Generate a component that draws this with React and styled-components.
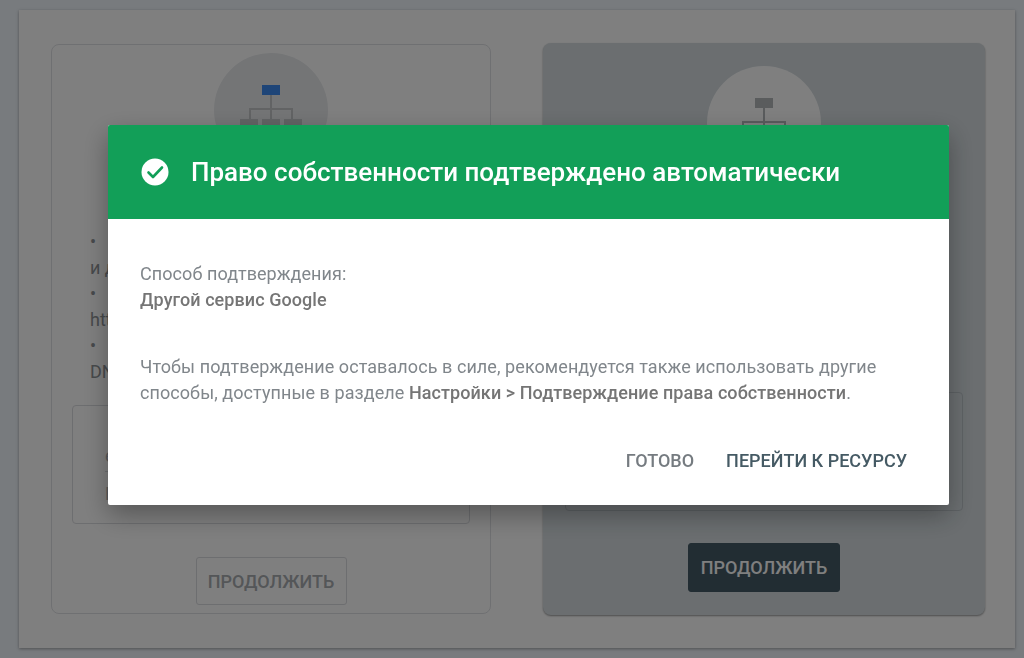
import React from 'react';
import styled, { createGlobalStyle } from 'styled-components';

const GlobalStyle = createGlobalStyle`
    html, body {
        margin: 0;
        height: 100%;
        overflow: hidden;
        background: #f0f6fc;
        font-family: Roboto, "Liberation Sans", sans-serif;
    }
`;

const Sheet = styled.main`
    box-sizing: border-box;
    width: 996px;
    height: 638px;
    margin: 10px 0 0 19px;
    padding: 33px 30px 33px 32px;
    display: grid;
    grid-template-columns: 440px 442px;
    justify-content: space-between;
    background: #fff;
    box-shadow: 0 1px 3px rgba(0, 0, 0, .35);
`;

const Card = styled.section`
    box-sizing: border-box;
    display: flex;
    flex-direction: column;
    align-items: center;
    padding: ${props => (props.selected ? '22px 21px 22px' : '8px 20px 8px')};
    margin: ${props => (props.selected ? '0' : '1px 0')};
    border-radius: 8px;
    border: 1px solid ${props => (props.selected ? 'transparent' : '#dfe1e5')};
    background: ${props => (props.selected ? '#d6dde1' : '#fff')};
    box-shadow: ${props => (props.selected ? '0 1px 2px rgba(0, 0, 0, .4)' : 'none')};
`;

const Badge = styled.div`
    flex: none;
    width: 114px;
    height: 114px;
    display: flex;
    justify-content: center;
    align-items: flex-start;
    padding-top: 32px;
    box-sizing: border-box;
    border-radius: 50%;
    background: ${props => (props.selected ? '#fff' : '#e8eaed')};
`;

const CardTitle = styled.h2`
    margin: 24px 0 0;
    font-size: 22px;
    font-weight: 400;
    color: #3c4043;
`;

const Features = styled.div`
    align-self: stretch;
    margin-top: 13px;
    padding-left: 18px;
    font-size: 18px;
    line-height: 26px;
    color: #8f9498;
`;

const Feature = styled.p`
    margin: 0;
    &::before {
        content: '•';
        margin-right: 12px;
    }
`;

const InputBox = styled.div`
    align-self: stretch;
    box-sizing: border-box;
    height: 119px;
    margin-top: auto;
    padding: 38px 32px 0;
    border: 1px solid ${props => (props.selected ? '#bcc4c9' : '#dadce0')};
    border-radius: 4px;
    font-size: 18px;
    color: #b0b4b8;
`;

const InputValue = styled.div`
    height: 27px;
    line-height: 24px;
    border-bottom: 1px solid #dadce0;
`;

const InputHint = styled.div`
    margin-top: 10px;
    line-height: 24px;
`;

const ContinueButton = styled.button`
    flex: none;
    box-sizing: border-box;
    width: ${props => (props.primary ? '152px' : '151px')};
    height: ${props => (props.primary ? '49px' : '48px')};
    margin-top: ${props => (props.primary ? '32px' : '33px')};
    padding: 0;
    border: 1px solid ${props => (props.primary ? '#445a66' : '#dadce0')};
    border-radius: 3px;
    background: ${props => (props.primary ? '#445a66' : '#fff')};
    color: ${props => (props.primary ? '#fff' : '#a8acb0')};
    font: 500 18px Roboto, sans-serif;
`;

const Scrim = styled.div`
    position: fixed;
    inset: 0;
    padding: 125px 0 0 108px;
    background: rgba(0, 0, 0, .5);
`;

const Dialog = styled.div`
    width: 841px;
    height: 380px;
    display: flex;
    flex-direction: column;
    background: #fff;
    border-radius: 2px;
    box-shadow: 0 10px 26px rgba(0, 0, 0, .32);
`;

const DialogHeader = styled.header`
    flex: none;
    height: 94px;
    padding-left: 33px;
    display: flex;
    align-items: center;
    gap: 22px;
    background: #129f58;
    border-radius: 2px 2px 0 0;
`;

const DialogTitle = styled.h1`
    margin: 0;
    font-size: 26px;
    font-weight: 500;
    color: #fff;
`;

const DialogBody = styled.div`
    flex: 1;
    padding: 42px 32px 0;
    font-size: 18px;
    line-height: 26px;
    letter-spacing: .07px;
    color: #80868b;
`;

const Paragraph = styled.p`
    margin: 0 0 ${props => props.gap || 0}px;
    b {
        font-weight: 500;
        color: #757575;
    }
`;

const DialogActions = styled.footer`
    flex: none;
    height: 88px;
    padding-right: 42px;
    display: flex;
    align-items: center;
    justify-content: flex-end;
    gap: 32px;
`;

const TextButton = styled.button`
    height: 26px;
    padding: 0;
    border: 0;
    background: none;
    font: 500 18px/26px Roboto, sans-serif;
    color: ${props => (props.primary ? '#455a64' : '#757b80')};
`;

function SiteIcon({ accent, line }) {
    return (
        <svg width="62" height="40" viewBox="0 0 62 40">
            <path d="M31 10v24M10 34V24h42v10" fill="none" stroke={line} strokeWidth="2" />
            <rect x="22" y="0" width="18" height="10" fill={accent} />
            <rect x="0" y="34" width="18" height="6" fill={line} />
            <rect x="22" y="34" width="18" height="6" fill={line} />
            <rect x="44" y="34" width="18" height="6" fill={line} />
        </svg>
    );
}

function CheckIcon() {
    return (
        <svg width="28" height="28" viewBox="0 0 28 28">
            <circle cx="14" cy="14" r="13.5" fill="#fff" />
            <path d="M7.5 14.5l4.5 4.5 9-9.5" fill="none" stroke="#129f58" strokeWidth="2.6" strokeLinecap="round" strokeLinejoin="round" />
        </svg>
    );
}

export default function App() {
    return (
        <React.Fragment>
            <GlobalStyle />
            <Sheet>
                <Card>
                    <Badge>
                        <SiteIcon accent="#3d8af0" line="#c4c7c9" />
                    </Badge>
                    <CardTitle>Домен</CardTitle>
                    <Features>
                        <Feature>Все URL на всех субдоменах (m., www.<br />и других)</Feature>
                        <Feature>Все URL с префиксами<br />https и http</Feature>
                        <Feature>Требуется подтверждение<br />DNS</Feature>
                    </Features>
                    <InputBox>
                        <InputValue>example.com</InputValue>
                        <InputHint>Enter domain</InputHint>
                    </InputBox>
                    <ContinueButton>ПРОДОЛЖИТЬ</ContinueButton>
                </Card>
                <Card selected>
                    <Badge selected>
                        <SiteIcon accent="#b4b8bb" line="#b4b8bb" />
                    </Badge>
                    <CardTitle>URL-префикс</CardTitle>
                    <InputBox selected>
                        <InputValue>https://example.com</InputValue>
                        <InputHint>Enter URL</InputHint>
                    </InputBox>
                    <ContinueButton primary>ПРОДОЛЖИТЬ</ContinueButton>
                </Card>
            </Sheet>
            <Scrim>
                <Dialog>
                    <DialogHeader>
                        <CheckIcon />
                        <DialogTitle>Право собственности подтверждено автоматически</DialogTitle>
                    </DialogHeader>
                    <DialogBody>
                        <Paragraph gap={41}>
                            Способ подтверждения:<br />
                            <b>Другой сервис Google</b>
                        </Paragraph>
                        <Paragraph>
                            Чтобы подтверждение оставалось в силе, рекомендуется также использовать другие
                            способы, доступные в разделе <b>Настройки &gt; Подтверждение права собственности</b>.
                        </Paragraph>
                    </DialogBody>
                    <DialogActions>
                        <TextButton>ГОТОВО</TextButton>
                        <TextButton primary>ПЕРЕЙТИ К РЕСУРСУ</TextButton>
                    </DialogActions>
                </Dialog>
            </Scrim>
        </React.Fragment>
    );
}
